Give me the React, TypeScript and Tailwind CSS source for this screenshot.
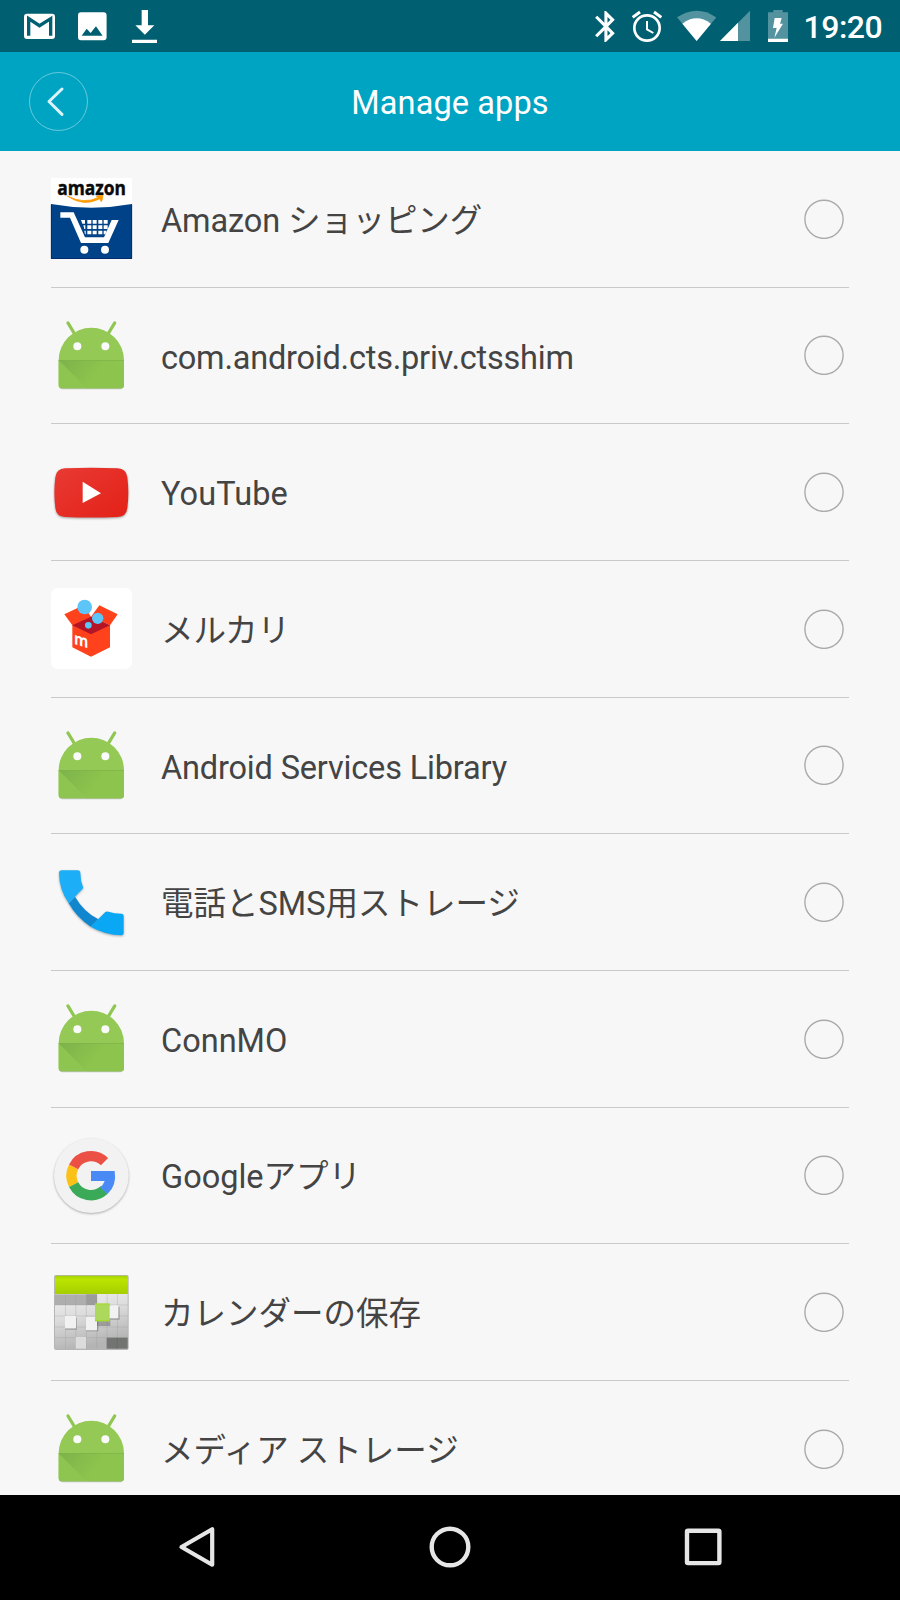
import { useState } from 'react'
import type { ReactNode } from 'react'

interface AppEntry {
  name: string
  icon: ReactNode
  tracking?: string
}

const AmazonIcon = () => (
  <svg viewBox="0 0 243 243" className="w-[81px] h-[81px] overflow-visible">
    <rect width="243" height="243" fill="#fff" />
    <path d="M0 78Q121 100 243 78V243H0Z" fill="#004287" />
    <path d="M1 80V241.500H242V80" fill="none" stroke="#00296b" strokeWidth="2.500" />
    <text
      x="19"
      y="52"
      textLength="206"
      lengthAdjust="spacingAndGlyphs"
      className="font-['Open_Sans',sans-serif] font-bold text-[61px]"
      fill="#0a0a0a"
      stroke="#0a0a0a"
      strokeWidth="1.500"
    >
      amazon
    </text>
    <path d="M49 54Q98 88 146 62L151 71Q156 62 155 53Q146 51 136 56L144 58Q98 80 49 54Z" fill="#f90" stroke="#f90" strokeWidth="2.500" />
    <path d="M28 103H68L102 178H159L182 126H203L172 195H90L57 119H28Z" fill="#fff" />
    <g fill="#fff">
      <path d="M90 126h12v11h-8zM109 126h12v11h-12zM125 126h12v11h-12zM142 126h12v11h-12zM158 126h12v11h-12z" />
      <path d="M97 142h6v11h-3zM109 142h12v11h-12zM125 142h12v11h-12zM142 142h12v11h-12zM158 142h12v11h-12z" />
      <path d="M100 158h4v11h-2zM109 158h12v11h-12zM125 158h12v11h-12zM142 158h12v11h-12zM158 158h9l-4 11h-5z" />
      <circle cx="100" cy="215" r="12" />
      <circle cx="162" cy="215" r="12" />
    </g>
  </svg>
)

const AndroidIcon = () => (
  <svg viewBox="0 0 243 243" className="w-[81px] h-[81px]">
    <defs>
      <linearGradient id="robotFold" x1="23" y1="136" x2="115" y2="205" gradientUnits="userSpaceOnUse">
        <stop offset="0" stopColor="#6c9f45" />
        <stop offset="1" stopColor="#8bc34a" />
      </linearGradient>
    </defs>
    <path d="M24 139V211Q24 223 35 223H207Q218 223 218 211V139Z" fill="#9a9a9a" opacity=".6" />
    <path d="M51 24L71 57M191 24L171 57" stroke="#8fc752" strokeWidth="10" strokeLinecap="round" />
    <path d="M23 136A98 98 0 0 1 219 136V210Q219 220 209 220H33Q23 220 23 210Z" fill="#93c954" />
    <path d="M23 136H219V210Q219 220 209 220H33Q23 220 23 210Z" fill="#8dc550" />
    <path d="M23 136H190L219 165V210Q219 220 209 220H107Z" fill="url(#robotFold)" opacity=".5" />
    <path d="M23 136.500H219" stroke="#7db048" strokeWidth="2" />
    <circle cx="79" cy="94" r="12" fill="#fafafa" />
    <circle cx="163" cy="94" r="12" fill="#fafafa" />
  </svg>
)

const YouTubeIcon = () => (
  <svg viewBox="0 0 243 243" className="w-[81px] h-[81px] drop-shadow-[0_1px_1px_rgba(0,0,0,0.35)]">
    <defs>
      <linearGradient id="ytRed" x1="0" y1="0" x2="1" y2="1">
        <stop offset="0" stopColor="#e83a34" />
        <stop offset="1" stopColor="#e32117" />
      </linearGradient>
    </defs>
    <path
      d="M42 49Q121 46 200 49Q226 50 229 76Q235 122 229 168Q226 194 200 195Q121 198 42 195Q16 194 13 168Q7 122 13 76Q16 50 42 49Z"
      fill="url(#ytRed)"
    />
    <path d="M95 89L150 124L95 153Z" fill="#fff" />
  </svg>
)

const MercariIcon = () => (
  <svg viewBox="0 0 243 243" className="w-[81px] h-[81px]">
    <rect width="243" height="243" rx="20" fill="#fff" />
    <path d="M40 79L97 52L120 86L177 112V178L120 206L64 178V112Z" fill="#ff411c" />
    <path d="M120 86L145 52L200 79L177 112Z" fill="#ff411c" />
    <path d="M64 112L120 86L177 112L120 139Z" fill="#b31527" />
    <circle cx="101" cy="57" r="22" fill="#5ec5f9" />
    <circle cx="140" cy="91" r="17" fill="#5ec5f9" />
    <circle cx="112" cy="112" r="10" fill="#5ec5f9" />
    <text
      transform="matrix(1 .3 0 1 69 168)"
      textLength="43"
      lengthAdjust="spacingAndGlyphs"
      className="font-['Open_Sans',sans-serif] font-bold text-[51px]"
      fill="#fff"
    >
      m
    </text>
  </svg>
)

const PhoneIcon = () => (
  <svg viewBox="0 0 243 243" className="w-[81px] h-[81px] drop-shadow-[0_1px_1px_rgba(0,0,0,0.3)]">
    <path d="M53 124L72 104Q98 149 142 172L119 194Q77 167 53 124Z" fill="#0f86cd" />
    <path d="M24 33Q24 25 32 25H80Q88 25 88 33Q88 57 97 78L53 124Q24 82 24 33Z" fill="#1daef8" />
    <path d="M119 194L163 150Q167 147 172 149Q190 155 211 155Q218 155 218 162V213Q218 220 211 220Q162 219 119 194Z" fill="#0aa7f5" />
  </svg>
)

const GoogleIcon = () => (
  <svg viewBox="0 0 243 243" className="w-[81px] h-[81px] drop-shadow-[0_1px_1px_rgba(0,0,0,0.3)]">
    <circle cx="121" cy="122" r="112" fill="#f2f2f2" />
    <g fill="none" strokeWidth="31">
      <path d="M67.900 148.600A58.500 58.500 0 0 1 67.900 95.400" stroke="#fbc116" />
      <path d="M160.600 79.900A58.500 58.500 0 0 0 67.900 95.400" stroke="#ec5044" />
      <path d="M67.900 148.600A58.500 58.500 0 0 0 159.100 165.500" stroke="#3aaa58" />
    </g>
    <path d="M120 108H191Q198 151 169.500 177L147 157Q157 150 161 138H120Z" fill="#4a8af5" />
  </svg>
)

const CalendarIcon = () => (
  <svg viewBox="0 0 243 243" className="w-[81px] h-[81px]">
    <defs>
      <linearGradient id="calGreen" x1="0" y1="0" x2="0" y2="1">
        <stop offset="0" stopColor="#a4d200" />
        <stop offset=".2" stopColor="#bbe400" />
        <stop offset="1" stopColor="#a6ce00" />
      </linearGradient>
      <linearGradient id="calGrid" x1="0" y1="0" x2="0.300" y2="1">
        <stop offset="0" stopColor="#efefef" />
        <stop offset=".45" stopColor="#dcdcdc" />
        <stop offset="1" stopColor="#b4b4b4" />
      </linearGradient>
    </defs>
    <rect x="9" y="9" width="224" height="225" rx="6" fill="#b5b5b5" />
    <rect x="12" y="66" width="218" height="164" fill="url(#calGrid)" />
    <rect x="12" y="11" width="218" height="55" rx="4" fill="url(#calGreen)" />
    <rect x="12" y="67" width="126" height="32" fill="#aeaeae" />
    <rect x="106" y="67" width="32" height="32" fill="#9b9b9b" />
    <path
      d="M43.500 67V230M74.500 67V230M106 67V230M137.500 67V230M168.500 67V230M199.500 67V230M12 99H230M12 132H230M12 165H230M12 197H230"
      stroke="#999"
      strokeOpacity=".45"
      strokeWidth="2"
    />
    <rect x="167" y="197" width="63" height="33" fill="#727472" />
    <path d="M198.500 197V230" stroke="#656565" strokeWidth="2" />
    <rect x="43" y="137" width="35" height="37" fill="#666" opacity=".35" />
    <rect x="106" y="141" width="36" height="37" fill="#555" opacity=".4" />
    <path d="M133 99H180V104H206V143H178V162H134Z" fill="#555" opacity=".4" />
    <rect x="42" y="132" width="33" height="37" fill="#f1f1f1" />
    <rect x="105" y="135" width="33" height="40" fill="#f1f1f1" />
    <rect x="74" y="195" width="31" height="35" fill="#dcdcdc" />
    <rect x="172" y="100" width="30" height="39" fill="#f2f2f2" />
    <rect x="132" y="95" width="44" height="53" fill="#acd85c" />
    <path d="M132 96H176M132 146H176" stroke="#a4dc24" strokeWidth="3" />
  </svg>
)

const apps: AppEntry[] = [
  { name: 'Amazon ショッピング', icon: <AmazonIcon />, tracking: 'tracking-[-0.13px]' },
  { name: 'com.android.cts.priv.ctsshim', icon: <AndroidIcon />, tracking: 'tracking-[-0.22px]' },
  { name: 'YouTube', icon: <YouTubeIcon />, tracking: 'tracking-[0.1px]' },
  { name: 'メルカリ', icon: <MercariIcon /> },
  { name: 'Android Services Library', icon: <AndroidIcon />, tracking: 'tracking-[-0.17px]' },
  { name: '電話とSMS用ストレージ', icon: <PhoneIcon /> },
  { name: 'ConnMO', icon: <AndroidIcon /> },
  { name: 'Googleアプリ', icon: <GoogleIcon /> },
  { name: 'カレンダーの保存', icon: <CalendarIcon /> },
  { name: 'メディア ストレージ', icon: <AndroidIcon /> },
]

const StatusBar = () => (
  <div className="flex h-[52px] shrink-0 items-center justify-between bg-[#006072] pl-6 pr-[18px] text-white">
    <div className="flex">
      {/* Gmail */}
      <svg viewBox="0 0 93 156" className="h-[52px] w-[31px]">
        <rect y="41" width="93" height="76" rx="9" fill="currentColor" />
        <path d="M14 107V56L46.500 77L80 56V107" fill="none" stroke="#006072" strokeWidth="10" />
      </svg>
      {/* Picture */}
      <svg viewBox="0 0 86 156" className="ml-[23px] h-[52px] w-[28.600px]">
        <path
          d="M9 37H77Q86 37 86 46V112Q86 121 77 121H9Q0 121 0 112V46Q0 37 9 37ZM11 107H74L54 79L38 99L26 86Z"
          fill="currentColor"
          fillRule="evenodd"
        />
      </svg>
      {/* Download */}
      <svg viewBox="0 0 75 156" className="ml-[25.400px] h-[52px] w-[25px]">
        <path d="M29 30H48V76H67L38.500 104L10 76H29ZM0 119H75V129H0Z" fill="currentColor" />
      </svg>
    </div>
    <div className="flex items-center">
      {/* Bluetooth */}
      <svg viewBox="0 0 60 156" className="h-[52px] w-5" fill="currentColor">
        <path
          transform="translate(-23 23.700) scale(4.650)"
          d="M17.710 7.710L12 2h-1v7.590L6.410 5 5 6.410 10.590 12 5 17.590 6.410 19 11 14.410V22h1l5.710-5.710-4.300-4.290 4.300-4.290zM13 5.830l1.880 1.880L13 9.590V5.830zm1.880 10.460L13 18.170v-3.760l1.880 1.880z"
        />
      </svg>
      {/* Alarm */}
      <svg viewBox="0 0 90 156" className="ml-[17.300px] h-[52px] w-[30px]" fill="none" stroke="currentColor">
        <circle cx="45" cy="84" r="38" strokeWidth="8" />
        <path d="M2 52L24 36M88 52L66 36" strokeWidth="9" />
        <path d="M45 63V88L64 99" strokeWidth="6" />
      </svg>
      {/* Wi-Fi */}
      <svg viewBox="0 0 118 156" className="ml-[14.700px] h-[52px] w-[39.300px]" fill="currentColor">
        <path d="M0 52Q59 12 118 52L59 123Z" opacity=".32" />
        <path d="M16 71Q59 39 102 71L59 123Z" />
      </svg>
      {/* Mobile signal */}
      <svg viewBox="0 0 90 156" className="ml-[3.700px] h-[52px] w-[30px]" fill="currentColor">
        <path d="M0 123L90 32V123Z" opacity=".32" />
        <path d="M0 123L54 68V123Z" />
      </svg>
      {/* Battery */}
      <svg viewBox="0 0 60 156" className="ml-[18.300px] h-[52px] w-5" fill="currentColor">
        <path d="M0 37H16V30H44V37H60V116H0Z" opacity=".32" />
        <path d="M20 54H41L36 71H45L19 113L26 84H15Z" />
        <rect y="116" width="60" height="10" />
      </svg>
      <span className="ml-[15.200px] mt-0.5 w-[78.500px] whitespace-nowrap text-[32px] font-medium leading-none tracking-[-0.500px]">
        19:20
      </span>
    </div>
  </div>
)

const Header = () => (
  <header className="grid h-[99px] shrink-0 grid-cols-[120px_1fr_120px] items-center bg-[#00a4c3] text-white">
    <button className="ml-[29px] flex size-[59px] items-center justify-center rounded-full border border-white/40" aria-label="Back">
      <svg viewBox="0 0 177 177" className="size-[59px] shrink-0">
        <path d="M99 51L60 88.500L99 127" fill="none" stroke="#dbf4f9" strokeWidth="9" strokeLinecap="round" strokeLinejoin="round" />
      </svg>
    </button>
    <h1 className="mt-1 text-center text-[32.500px] leading-none tracking-[0.100px]">Manage apps</h1>
  </header>
)

const AppRow = ({ name, icon, tracking = '', selected, onToggle }: AppEntry & { selected: boolean; onToggle: () => void }) => (
  <li
    className="flex h-[136.660px] shrink-0 items-center border-b border-[#c9c9c9] pr-[5px]"
    onClick={onToggle}
  >
    <div className="size-[81px] shrink-0">{icon}</div>
    <span className={`ml-[29px] mt-[4.600px] flex-1 whitespace-nowrap text-[32.500px] leading-none text-[#444] ${tracking}`}>
      {name}
    </span>
    <svg viewBox="0 0 40 40" className="size-10 shrink-0">
      <circle cx="20" cy="20.300" r="19.100" fill={selected ? '#00a4c3' : 'none'} stroke="#aaa" strokeWidth="1.400" />
    </svg>
  </li>
)

const NavBar = () => (
  <nav className="flex h-[105px] shrink-0 items-center justify-between bg-black px-[176px] pb-px">
    <svg viewBox="0 0 42 42" className="size-[42px]" fill="none" stroke="#e6e6e6" strokeWidth="4.200">
      <path d="M36.200 3.300V38.700L5.500 21Z" strokeLinejoin="round" />
    </svg>
    <svg viewBox="0 0 42 42" className="size-[42px]" fill="none" stroke="#e6e6e6" strokeWidth="4.400">
      <circle cx="21" cy="21" r="18.300" />
    </svg>
    <svg viewBox="0 0 42 42" className="size-[42px]" fill="none" stroke="#e6e6e6" strokeWidth="4.400">
      <rect x="5" y="4.700" width="32.400" height="32.400" rx="1" />
    </svg>
  </nav>
)

export default function App() {
  const [selected, setSelected] = useState<string[]>([])

  const toggle = (name: string) => {
    setSelected(prev => (prev.includes(name) ? prev.filter(n => n !== name) : [...prev, name]))
  }

  return (
    <div className="flex h-[1600px] w-[900px] flex-col overflow-hidden bg-[#f7f7f7] font-[Roboto,'Noto_Sans_CJK_JP',sans-serif]">
      <StatusBar />
      <Header />
      <ul className="flex min-h-0 flex-1 flex-col overflow-hidden pl-[51px] pr-[51px]">
        {apps.map(app => (
          <AppRow
            key={app.name}
            {...app}
            selected={selected.includes(app.name)}
            onToggle={() => toggle(app.name)}
          />
        ))}
      </ul>
      <NavBar />
    </div>
  )
}
